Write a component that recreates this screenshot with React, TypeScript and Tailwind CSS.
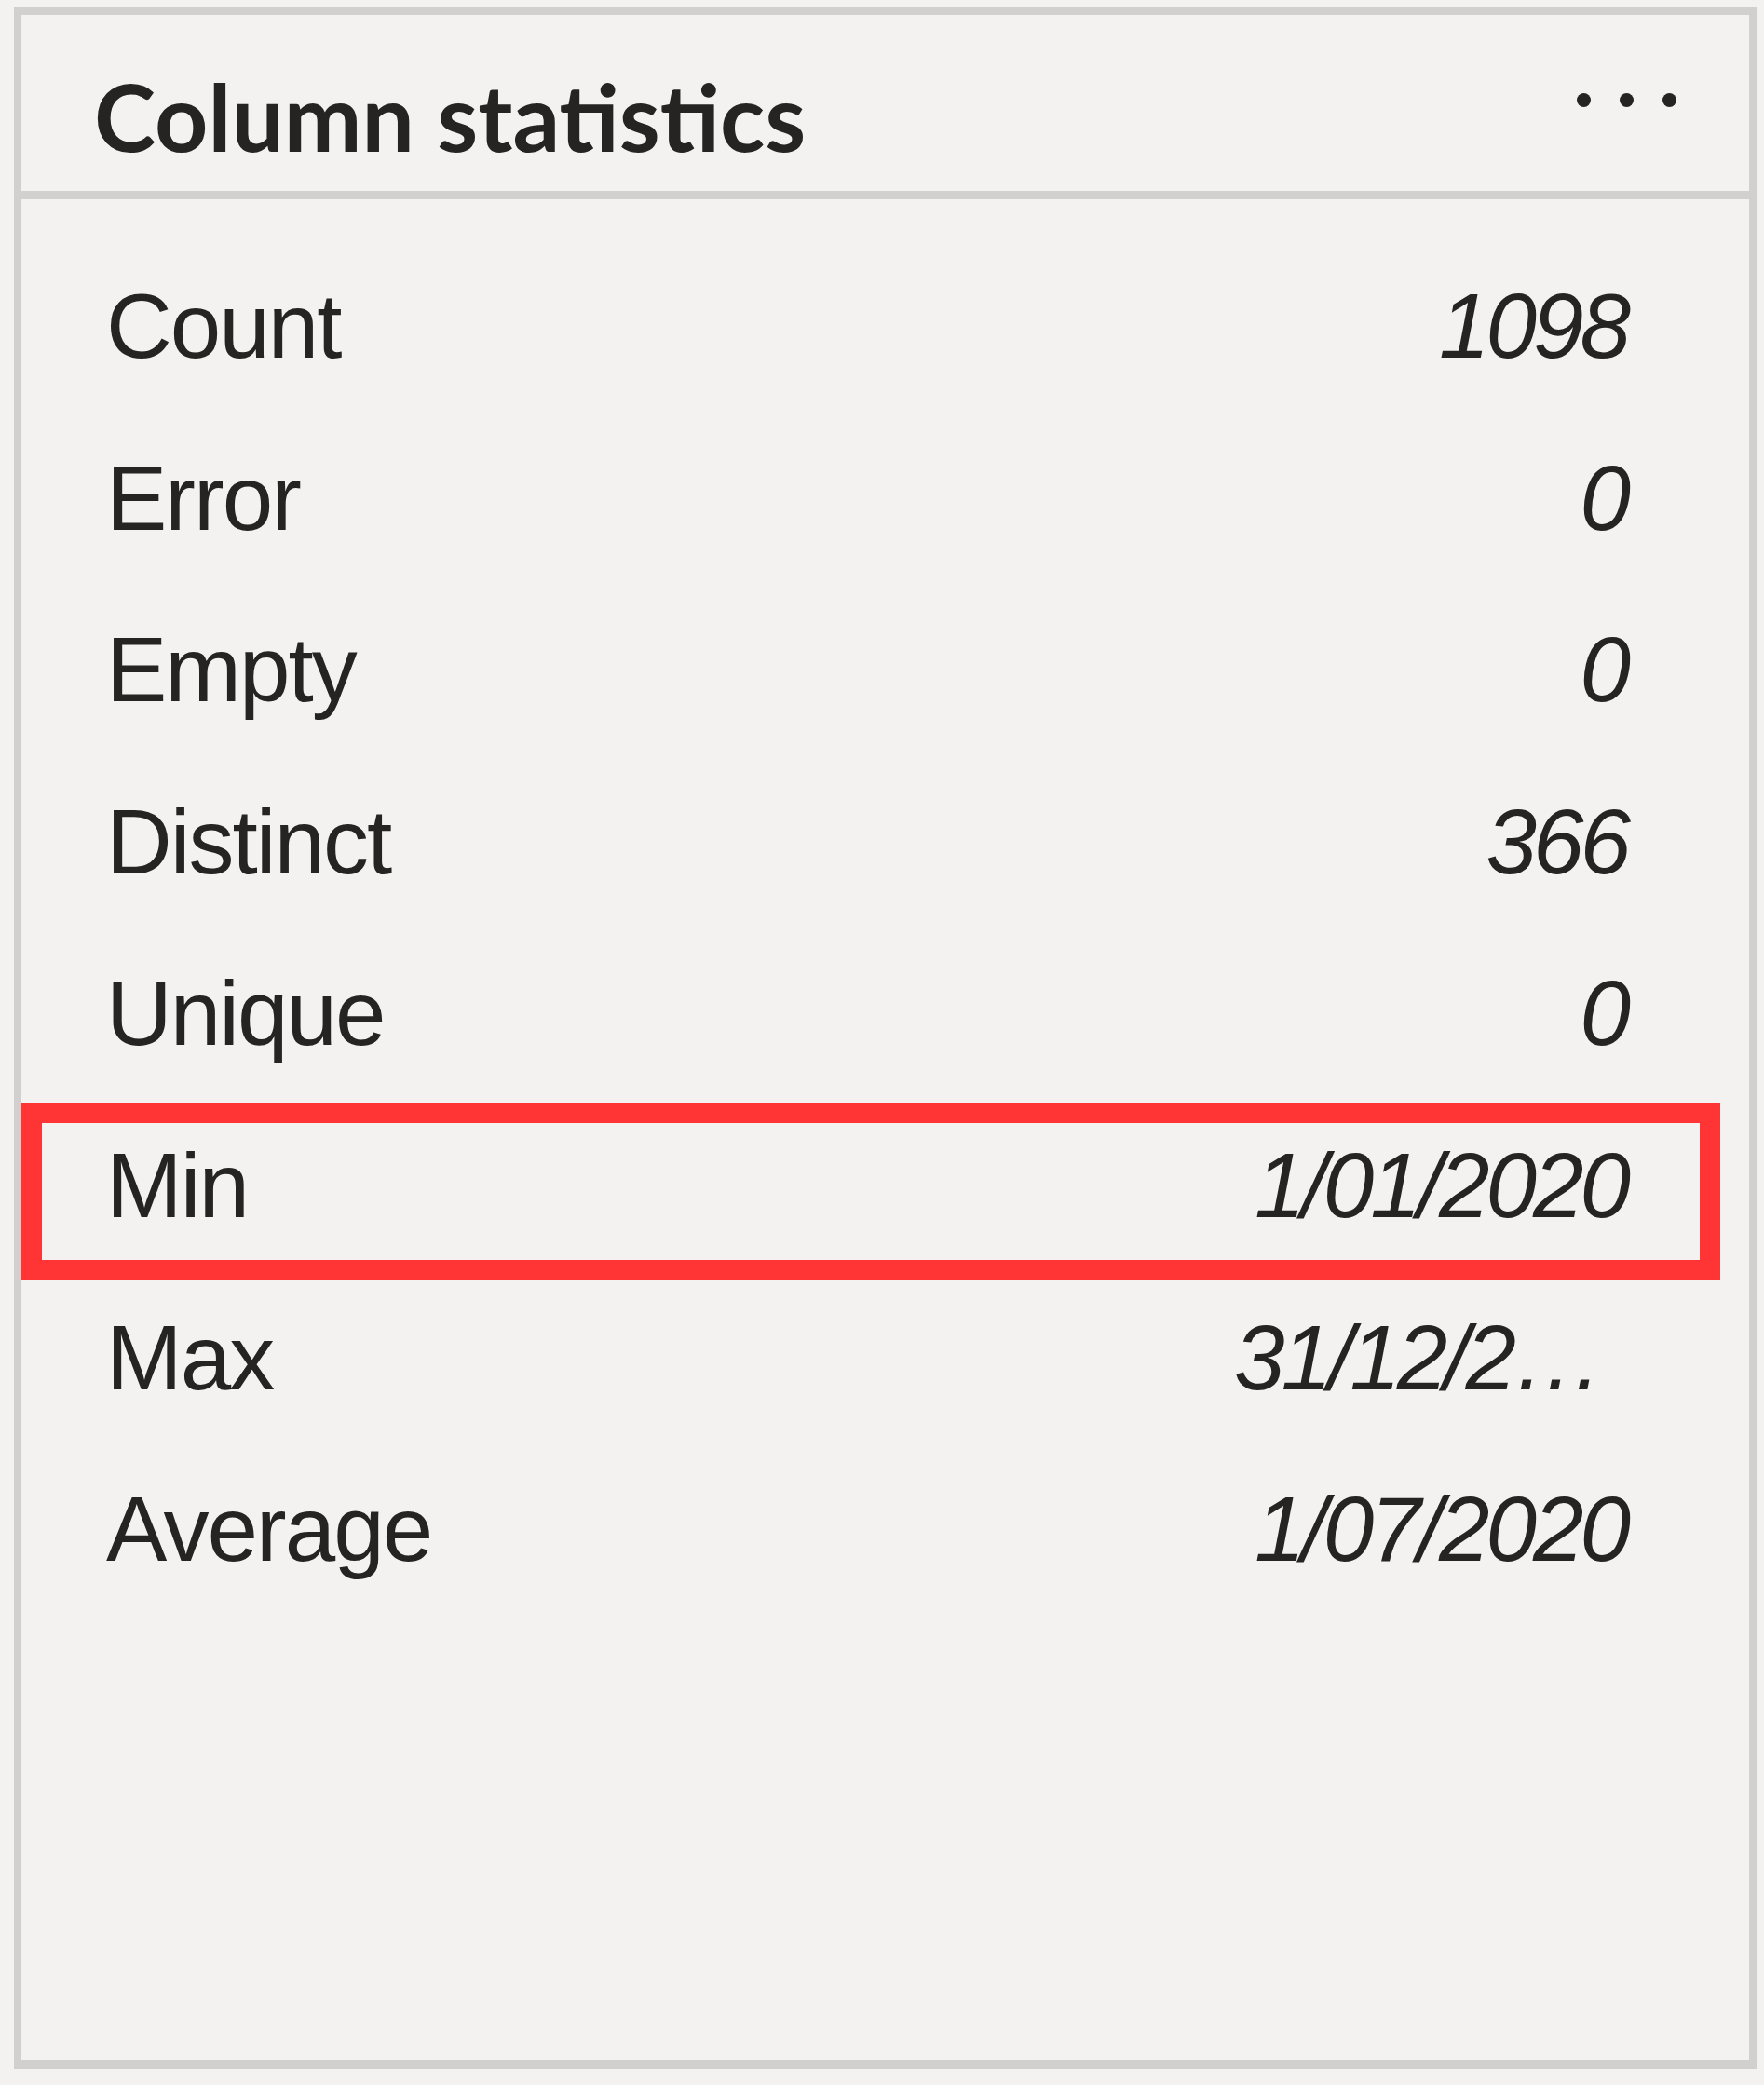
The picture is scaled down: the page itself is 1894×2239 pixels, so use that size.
export default function App() {
  const rows: [string, string][] = [
    ["Count", "1098"],
    ["Error", "0"],
    ["Empty", "0"],
    ["Distinct", "366"],
    ["Unique", "0"],
    ["Min", "1/01/2020"],
    ["Max", "31/12/2020"],
    ["Average", "1/07/2020"],
  ];
  return (
    <div className="min-h-[2239px] w-[1894px] bg-[#f3f2f1] pl-[15px] pt-[8px]">
      <div className="flex h-[2214px] w-[1871px] flex-col border-8 border-b-[10px] border-[#d1d0ce] bg-[#f3f2f1]">
        <div className="flex h-[198px] shrink-0 items-start justify-between border-b-[9px] border-[#d1d0ce] pl-[78px] pr-[78px]">
          <h2 className="pt-[58px] font-['Lato',sans-serif] text-[100px] leading-none font-bold text-[#252423]">
            Column statistics
          </h2>
          <div className="mt-[84px] flex gap-[31px]">
            <span className="block h-[15px] w-[15px] rounded-full bg-[#252423]" />
            <span className="block h-[15px] w-[15px] rounded-full bg-[#252423]" />
            <span className="block h-[15px] w-[15px] rounded-full bg-[#252423]" />
          </div>
        </div>
        <div className="pt-[44px] font-['Liberation_Sans',Arial,sans-serif] text-[98px] leading-[184.6px] text-[#252423]">
          {rows.map(([label, value]) => (
            <div
              key={label}
              className="relative flex h-[184.6px] items-start justify-between pl-[91px] pr-[119px]"
            >
              <span className="whitespace-nowrap tracking-[-2px]">{label}</span>
              <span className="w-[434px] overflow-hidden text-ellipsis whitespace-nowrap pr-[12px] text-right italic tracking-[-4px]">
                {value}
              </span>
              {label === "Min" && (
                <div className="pointer-events-none absolute top-[3px] right-[31px] -bottom-[9px] left-0 border-[22px] border-[#ff3434]" />
              )}
            </div>
          ))}
        </div>
      </div>
    </div>
  );
}
